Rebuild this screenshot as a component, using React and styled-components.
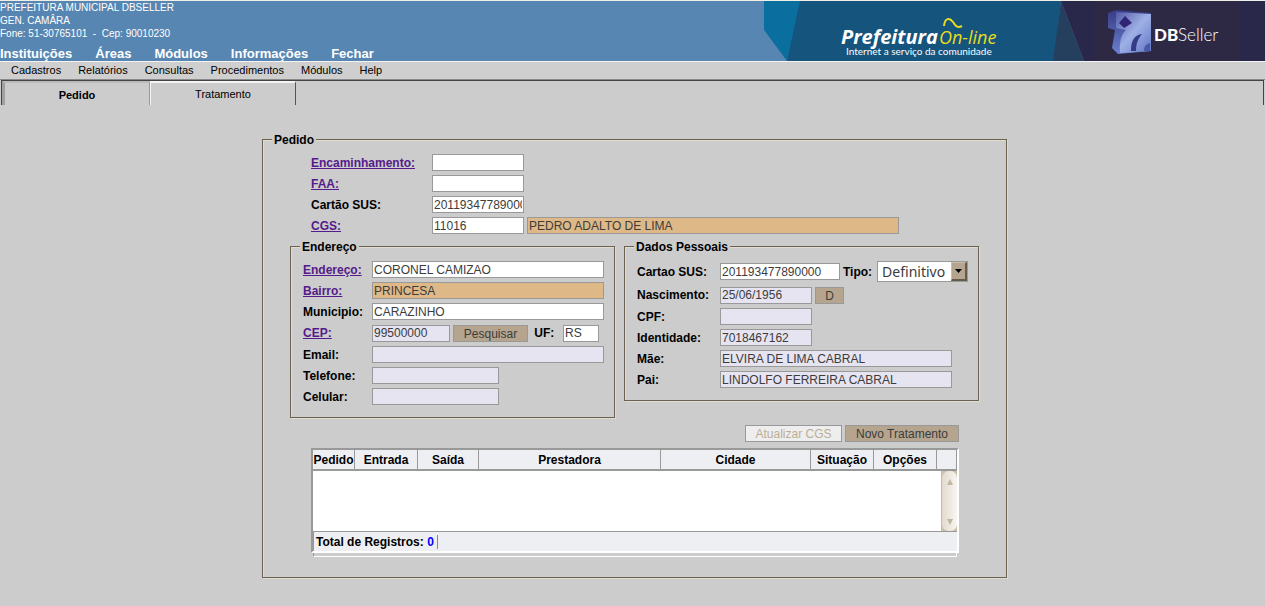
import React from 'react';
import styled, { createGlobalStyle } from 'styled-components';

const GlobalStyle = createGlobalStyle`
  * { box-sizing: border-box; }
  body {
    margin: 0;
    background: #cccccc;
    color: #000;
    font: 12px/16px "Liberation Sans", Arial, sans-serif;
  }
`;

const Header = styled.header`
  display: flex;
  justify-content: space-between;
  height: 61px;
  border-top: 1px solid #efefe8;
  background: #5786b2;
  color: #fff;
`;

const Institution = styled.div`
  display: flex;
  flex-direction: column;
  justify-content: space-between;
`;

const Address = styled.address`
  font-style: normal;
  font-size: 10px;
  line-height: 13px;
  white-space: pre;
`;

const MainNav = styled.nav`
  display: flex;
  gap: 23px;
  font-size: 13px;
  line-height: 14px;
  font-weight: bold;
`;

const NavLink = styled.a`
  color: inherit;
  text-decoration: none;
`;

const Banner = styled.svg`
  display: block;
  flex: none;
`;

const MenuBar = styled.nav`
  display: flex;
  gap: 17px;
  padding: 0 11px;
  border-top: 1px solid #f4f4f4;
  border-bottom: 1px solid #8a8a8a;
  background: #cfcfcf;
  font-size: 11px;
  line-height: 17px;
`;

const TabStrip = styled.div`
  display: flex;
  height: 25px;
  margin: 0 1px;
  border: solid #444;
  border-width: 1px 1px 0;
`;

const Tab = styled.button`
  width: ${(p) => (p.$active ? 148 : 146)}px;
  padding: ${(p) => (p.$active ? '2px 0 0' : '0')};
  border: solid;
  border-width: ${(p) => (p.$active ? '2px 1px 0 3px' : '2px 1px 0 1px')};
  border-color: ${(p) => (p.$active ? '#bbb #999 #bbb #a0a0a0' : '#f4f4f4 #555 #555 #f4f4f4')};
  background: #cccccc;
  color: #000;
  font: ${(p) => (p.$active ? 'bold' : 'normal')} 11px/16px "Liberation Sans", Arial, sans-serif;
`;

const Main = styled.main`
  display: flex;
  justify-content: center;
  padding: 26px 0 28px 4px;
`;

const Group = styled.fieldset`
  flex: 0 1 ${(p) => p.$width}px;
  min-width: 0;
  margin: 0;
  padding: ${(p) => p.$pad};
  border: 1px solid #6b6150;
  box-shadow: inset 1px 1px 0 #e0dccf, 1px 1px 0 #e0dccf;
`;

const Legend = styled.legend`
  margin-left: -${(p) => p.$outdent || 3}px;
  padding: 2px 2px 0;
  background: #cccccc;
  font-weight: bold;
  line-height: 14px;
`;

const Fields = styled.div`
  display: flex;
  flex-direction: column;
  gap: 4px;
  margin-left: ${(p) => p.$indent || 0}px;
`;

const Row = styled.div`
  display: flex;
  align-items: center;
  gap: 3px;
  height: ${(p) => p.$height || 17}px;
`;

const Label = styled.label`
  flex: none;
  width: ${(p) => (p.$width ? `${p.$width}px` : 'auto')};
  margin-right: ${(p) => (p.$width ? -3 : 0)}px;
  font-weight: bold;
  white-space: nowrap;
`;

const LabelLink = styled.a`
  color: #551a8b;
`;

const fills = { white: '#ffffff', tan: '#deb887', lilac: '#e6e4f1' };

const Input = styled.input`
  width: ${(p) => p.$width}px;
  height: 17px;
  padding: 0 1px;
  border: 1px solid #999;
  border-radius: 0;
  background: ${(p) => fills[p.$fill || 'white']};
  color: #3c3c3c;
  font: 12px/15px "Liberation Sans", Arial, sans-serif;
`;

const Button = styled.button`
  width: ${(p) => p.$width}px;
  height: 17px;
  padding: 1px 0 0;
  border: 1px solid #999;
  background: #b5a58f;
  color: #3c3c3c;
  font: 12px/14px "Liberation Sans", Arial, sans-serif;
  &:disabled {
    background: #eeeeee;
    color: #bbad96;
  }
`;

const SelectBox = styled.span`
  display: inline-grid;
  grid-template-columns: 1fr 16px;
  width: 91px;
  height: 21px;
  margin-left: 2px;
  border: 1px solid #999;
  background: #fff;
`;

const Select = styled.select`
  grid-area: 1 / 1 / 2 / 3;
  min-width: 0;
  padding: 0 0 0 4px;
  appearance: none;
  border: 0;
  background: transparent;
  color: #3c3c3c;
  font: 14px/18px "Noto Sans", sans-serif;
`;

const SelectArrow = styled.span`
  display: grid;
  place-items: center;
  grid-area: 1 / 2;
  border: 1px solid;
  border-color: #c9bda9 #645b4d #645b4d #c9bda9;
  border-right-width: 2px;
  border-bottom-width: 2px;
  background: #b5a58f;
  pointer-events: none;
`;

const Columns = styled.div`
  display: flex;
  align-items: flex-start;
  gap: 9px;
  margin-top: 4px;
`;

const Actions = styled.div`
  display: flex;
  justify-content: flex-end;
  gap: 3px;
  margin: 7px 20px 6px 0;
`;

const GridFrame = styled.div`
  margin: 0 20px 0 21px;
  border: 2px solid;
  border-color: #999 #fff #fff #999;
`;

const Grid = styled.table`
  width: 100%;
  table-layout: fixed;
  border-collapse: separate;
  border-spacing: 0;
`;

const HeadCell = styled.th`
  width: ${(p) => (p.$width ? `${p.$width}px` : 'auto')};
  height: 21px;
  padding: 0;
  border-right: 1px solid #999;
  border-bottom: 2px solid #999;
  background: #eeeff3;
  line-height: 16px;
`;

const BodyCell = styled.td`
  height: 60px;
  padding: 0;
  background: #fff;
`;

const ScrollTrack = styled.div`
  display: flex;
  width: 16px;
  height: 60px;
  margin-left: auto;
  border-left: 1px solid #c9bda6;
  background: #cdc1aa;
`;

const ScrollThumb = styled.div`
  display: flex;
  flex: 1;
  flex-direction: column;
  align-items: center;
  justify-content: space-between;
  padding: 8px 0 6px;
  border-radius: 7px;
  background: linear-gradient(90deg, #e2dacd, #f8f6f2);
`;

const FootCell = styled.td`
  height: 20px;
  padding: 0 2px;
  border-top: 1px solid #999;
  border-left: 1px solid #999;
  background: #eeeff3;
  font-weight: bold;
`;

const Total = styled.span`
  display: inline-block;
  padding-right: 3px;
  border-right: 1px solid #888;
  line-height: 14px;
`;

const Count = styled.span`
  color: #0000ff;
`;

const GridTail = styled.div`
  height: 4px;
  margin: 0 22px 0 23px;
  border: solid;
  border-width: 0 1px 1px;
  border-color: #fff #fff #fff #999;
`;

function Field({ id, label, link, labelWidth, width, value, fill, height, children }) {
  return (
    <Row $height={height}>
      <Label htmlFor={id} $width={labelWidth}>
        {link ? <LabelLink href="#">{label}</LabelLink> : label}
      </Label>
      <Input id={id} $width={width} $fill={fill} defaultValue={value} />
      {children}
    </Row>
  );
}

function BannerArt() {
  return (
    <Banner width="501" height="60" viewBox="0 0 501 60" role="img" aria-label="Prefeitura On-line - DBSeller">
      <defs>
        <linearGradient id="cube" x1="0" y1="0" x2="1" y2="1">
          <stop offset="0" stopColor="#5259a8" />
          <stop offset="0.5" stopColor="#9fb0e6" />
          <stop offset="1" stopColor="#6175c4" />
        </linearGradient>
        <linearGradient id="side" x1="0" y1="0" x2="0" y2="1">
          <stop offset="0" stopColor="#383b84" />
          <stop offset="1" stopColor="#6a80cf" />
        </linearGradient>
      </defs>
      <path d="M0 0H38L23 60L0 29Z" fill="#0a6f9f" />
      <path d="M36 0H297L290 60H23Z" fill="#15547c" />
      <path d="M297 0L320 60H289Z" fill="#25405f" />
      <path d="M297 0H501V60H320Z" fill="#29274a" />
      <path d="M330 0H476V60H330Z" fill="#2d2945" />
      <path d="M344 12L352 9L387 12V50L376 51L354 53L348 47L351 29L344 27Z" fill="url(#side)" />
      <path d="M352 11L387 13V50L356 52C355 42 357 33 362 29L352 27Z" fill="url(#cube)" />
      <path d="M361 15L368 22L360 27L355 22Z" fill="#302574" />
      <path d="M367 50C367 40 370 34 378 33C374 38 372 42 372 50Z" fill="#343b87" />
      <path d="M380 50C380 45 382 43 386 42V50Z" fill="#4a58a8" />
      <path d="M180 25C181 16 186 17 189 21C192 26 194 27 198 25" fill="none" stroke="#e8dc22" strokeWidth="2" />
      <g fontFamily="Open Sans, sans-serif">
        <text x="77" y="43" fontSize="20" fontWeight="bold" fontStyle="italic" fill="#fff">Prefeitura</text>
        <text x="175" y="43" fontSize="18" fontStyle="italic" fill="#e8dc22">On-line</text>
        <text x="82" y="54" fontSize="10" fill="#fff" fontFamily="Lato, sans-serif">Internet a serviço da comunidade</text>
      </g>
      <g fontFamily="Lato, sans-serif" fill="#fff">
        <text x="390" y="40" fontSize="17" fontWeight="900">DB</text>
        <text x="414" y="40" fontSize="17" fontWeight="300">Seller</text>
      </g>
    </Banner>
  );
}

const columns = [
  ['Pedido', 42],
  ['Entrada', 63],
  ['Saída', 61],
  ['Prestadora', 182],
  ['Cidade', 150],
  ['Situação', 63],
  ['Opções', 63],
  ['', 0],
];

export default function App() {
  return (
    <>
      <GlobalStyle />
      <Header>
        <Institution>
          <Address>{'PREFEITURA MUNICIPAL DBSELLER\nGEN. CAMÂRA\nFone: 51-30765101  -  Cep: 90010230'}</Address>
          <MainNav>
            {['Instituições', 'Áreas', 'Módulos', 'Informações', 'Fechar'].map((t) => (
              <NavLink href="#" key={t}>{t}</NavLink>
            ))}
          </MainNav>
        </Institution>
        <BannerArt />
      </Header>
      <MenuBar>
        {['Cadastros', 'Relatórios', 'Consultas', 'Procedimentos', 'Módulos', 'Help'].map((t) => (
          <NavLink href="#" key={t}>{t}</NavLink>
        ))}
      </MenuBar>
      <TabStrip role="tablist">
        <Tab role="tab" aria-selected="true" $active>Pedido</Tab>
        <Tab role="tab" aria-selected="false">Tratamento</Tab>
      </TabStrip>
      <Main>
        <Group $width={745} $pad="7px 27px 20px 27px">
          <Legend $outdent={18}>Pedido</Legend>
          <Fields $indent={21}>
            <Field id="enc" label="Encaminhamento:" link labelWidth={121} width={92} />
            <Field id="faa" label="FAA:" link labelWidth={121} width={92} />
            <Field id="sus" label="Cartão SUS:" labelWidth={121} width={92} value="201193477890000" />
            <Field id="cgs" label="CGS:" link labelWidth={121} width={92} value="11016">
              <Input aria-label="Nome" $width={372} $fill="tan" defaultValue="PEDRO ADALTO DE LIMA" />
            </Field>
          </Fields>
          <Columns>
            <Group $width={325} $pad="7px 10px 12px 12px">
              <Legend>Endereço</Legend>
              <Fields>
                <Field id="end" label="Endereço:" link labelWidth={69} width={232} value="CORONEL CAMIZAO" />
                <Field id="bai" label="Bairro:" link labelWidth={69} width={232} fill="tan" value="PRINCESA" />
                <Field id="mun" label="Municipio:" labelWidth={69} width={232} value="CARAZINHO" />
                <Field id="cep" label="CEP:" link labelWidth={69} width={78} height={18} fill="lilac" value="99500000">
                  <Button $width={75}>Pesquisar</Button>
                  <Label htmlFor="uf" $width={32}>&nbsp;UF:</Label>
                  <Input id="uf" $width={36} defaultValue="RS" />
                </Field>
                <Field id="ema" label="Email:" labelWidth={69} width={232} fill="lilac" />
                <Field id="tel" label="Telefone:" labelWidth={69} width={127} fill="lilac" />
                <Field id="cel" label="Celular:" labelWidth={69} width={127} fill="lilac" />
              </Fields>
            </Group>
            <Group $width={355} $pad="7px 10px 12px 12px">
              <Legend>Dados Pessoais</Legend>
              <Fields>
                <Field id="sus2" label="Cartao SUS:" labelWidth={83} width={120} height={21} value="201193477890000">
                  <Label htmlFor="tipo">Tipo:</Label>
                  <SelectBox>
                    <Select id="tipo" defaultValue="Definitivo"><option>Definitivo</option></Select>
                    <SelectArrow><svg width="7" height="4"><path d="M0 0H7L3.5 4Z" /></svg></SelectArrow>
                  </SelectBox>
                </Field>
                <Field id="nas" label="Nascimento:" labelWidth={83} width={92} height={18} fill="lilac" value="25/06/1956">
                  <Button $width={29}>D</Button>
                </Field>
                <Field id="cpf" label="CPF:" labelWidth={83} width={92} fill="lilac" />
                <Field id="ide" label="Identidade:" labelWidth={83} width={92} fill="lilac" value="7018467162" />
                <Field id="mae" label="Mãe:" labelWidth={83} width={232} fill="lilac" value="ELVIRA DE LIMA CABRAL" />
                <Field id="pai" label="Pai:" labelWidth={83} width={232} fill="lilac" value="LINDOLFO FERREIRA CABRAL" />
              </Fields>
            </Group>
          </Columns>
          <Actions>
            <Button $width={97} disabled>Atualizar CGS</Button>
            <Button $width={114}>Novo Tratamento</Button>
          </Actions>
          <GridFrame>
            <Grid>
              <thead>
                <tr>
                  {columns.map(([t, w]) => <HeadCell key={t} $width={w}>{t}</HeadCell>)}
                </tr>
              </thead>
              <tbody>
                <tr>
                  <BodyCell colSpan={8}>
                    <ScrollTrack>
                      <ScrollThumb>
                        <svg width="6" height="6"><path d="M3 0L6 6H0Z" fill="#c2b69f" /></svg>
                        <svg width="6" height="6"><path d="M3 6L6 0H0Z" fill="#c2b69f" /></svg>
                      </ScrollThumb>
                    </ScrollTrack>
                  </BodyCell>
                </tr>
              </tbody>
              <tfoot>
                <tr>
                  <FootCell colSpan={8}>
                    <Total>Total de Registros: <Count>0</Count></Total>
                  </FootCell>
                </tr>
              </tfoot>
            </Grid>
          </GridFrame>
          <GridTail />
        </Group>
      </Main>
    </>
  );
}
